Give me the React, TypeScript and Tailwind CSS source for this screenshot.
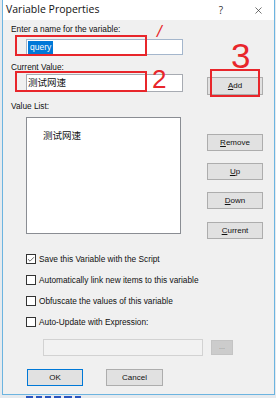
import { Check, X } from 'lucide-react';

const ui = { fontFamily: '"Liberation Sans", Arial, sans-serif' };
const cjk = { fontFamily: '"Liberation Sans", "Noto Sans CJK SC", sans-serif' };

function Btn({ label, u, className = '' }: { label: string; u: number; className?: string }) {
  return (
    <div
      className={`flex h-[17px] w-[56px] items-center justify-center border border-[#adadad] bg-[#e1e1e1] text-[8px] text-[#111] ${className}`}
    >
      <span>
        {label.slice(0, u)}
        <span className="underline underline-offset-1">{label[u]}</span>
        {label.slice(u + 1)}
      </span>
    </div>
  );
}

function CheckRow({ label, checked = false }: { label: string; checked?: boolean }) {
  return (
    <div className="flex h-[10px] items-center gap-[3px] pl-[15px]">
      <div className="flex h-[10px] w-[10px] items-center justify-center border border-[#333] bg-white">
        {checked && <Check className="h-[9px] w-[9px] text-[#222]" strokeWidth={2} />}
      </div>
      <span className="text-[8.3px] leading-none text-[#111]">{label}</span>
    </div>
  );
}

export default function App() {
  return (
    <div className="relative h-[398px] w-[276px] overflow-hidden bg-[#e6eaee]" style={ui}>
      <div className="ml-[2px] flex h-[395px] w-[273px] flex-col border border-t-0 border-[#6cb4e0]">
        {/* title bar */}
        <div className="flex h-[20px] items-center bg-white pl-[3px] pr-[10px]">
          <span className="flex-1 text-[10.5px] text-[#111]" style={{ fontFamily: '"Open Sans", sans-serif' }}>
            Variable Properties
          </span>
          <span className="mr-[30px] text-[10px] text-[#333]" style={{ fontFamily: '"Open Sans", sans-serif' }}>
            ?
          </span>
          <X className="h-[11px] w-[11px] text-[#333]" strokeWidth={1.5} />
        </div>

        {/* body */}
        <div className="flex flex-1 flex-col bg-[#f0f0f0] pl-[8px]">
          <div className="mt-[4px] h-[10px] text-[8.3px] leading-[10px] text-[#111]">Enter a name for the variable:</div>
          <div className="ml-[15px] mt-[5px] flex h-[16px] w-[157px] items-center border border-[#a4b6cc] bg-white pl-[1px]">
            <span className="bg-[#0078d7] px-[2px] text-[8.5px] leading-[13px] text-white">query</span>
          </div>

          <div className="mt-[7px] h-[10px] text-[8.3px] leading-[10px] text-[#111]">Current Value:</div>
          <div className="mt-[2px] flex h-[21px] items-start">
            <div className="ml-[15px] flex h-[18px] w-[157px] items-center border border-[#a7abb2] bg-white pl-[1px]">
              <span className="text-[9.5px] leading-none text-[#111]" style={cjk}>测试网速</span>
            </div>
            <Btn label="Add" u={0} className="ml-[24px] mt-[3px] h-[18px]" />
          </div>

          <div className="mt-[6px] h-[10px] text-[8.3px] leading-[10px] text-[#111]">Value List:</div>
          <div className="mt-[6px] flex h-[117px] items-start">
            <div className="ml-[15px] h-[117px] w-[155px] border border-[#8a8d93] bg-white pl-[16px] pt-[4px]">
              <span className="text-[9.5px] leading-none text-[#111]" style={cjk}>测试网速</span>
            </div>
            <div className="ml-[26px] mt-[17px] flex flex-col gap-[12px]">
              <Btn label="Remove" u={0} />
              <Btn label="Up" u={0} />
              <Btn label="Down" u={0} />
              <Btn label="Current" u={0} className="mt-[1px]" />
            </div>
          </div>

          <div className="mt-[20px] flex flex-col gap-[11px]">
            <CheckRow label="Save this Variable with the Script" checked />
            <CheckRow label="Automatically link new items to this variable" />
            <CheckRow label="Obfuscate the values of this variable" />
            <CheckRow label="Auto-Update with Expression:" />
          </div>

          <div className="mt-[12px] flex h-[17px] items-center">
            <div className="ml-[32px] h-[17px] w-[160px] border border-[#d2d2d2] bg-[#f2f2f2]" />
            <div className="ml-[8px] flex h-[15px] w-[22px] items-center justify-center border border-[#c4c4c4] bg-[#cccccc] text-[7px] text-[#8a8a8a]">
              ...
            </div>
          </div>

          <div className="mt-[13px] flex h-[17px] items-center">
            <div className="ml-[16px] flex h-[17px] w-[56px] items-center justify-center border border-[#0078d7] bg-[#e1e1e1] text-[8px] text-[#111]">
              OK
            </div>
            <div className="ml-[23px] flex h-[17px] w-[57px] items-center justify-center border border-[#adadad] bg-[#e1e1e1] text-[8px] text-[#111]">
              Cancel
            </div>
          </div>
        </div>
      </div>
      {/* clipped page text peeking below the dialog */}
      <div className="ml-[26px] flex h-[3px] items-end gap-[3px]">
        <div className="h-[2px] w-[7px] bg-[#2a55c0]" />
        <div className="h-[2px] w-[6px] bg-[#2a55c0]" />
        <div className="h-[2px] w-[6px] bg-[#2a55c0]" />
        <div className="h-[2px] w-[7px] bg-[#2a55c0]" />
        <div className="h-[2px] w-[8px] bg-[#2a55c0]" />
        <div className="h-[2px] w-[6px] bg-[#2a55c0]" />
      </div>

      {/* red annotations */}
      <div className="absolute left-[15px] top-[35px] h-[21px] w-[132px] border-2 border-[#e8262b]" />
      <div className="absolute left-[15px] top-[71px] h-[21px] w-[132px] border-2 border-[#e8262b]" />
      <div className="absolute left-[210px] top-[69px] h-[28px] w-[50px] border-2 border-[#e8262b]" />
      <span className="absolute left-[157px] top-[23px] text-[17px] italic leading-none text-[#e8262b]">/</span>
      <span className="absolute left-[152px] top-[66px] text-[26px] leading-none text-[#e8262b]">2</span>
      <span className="absolute left-[231px] top-[38px] text-[35px] leading-none text-[#e8262b]">3</span>
    </div>
  );
}
